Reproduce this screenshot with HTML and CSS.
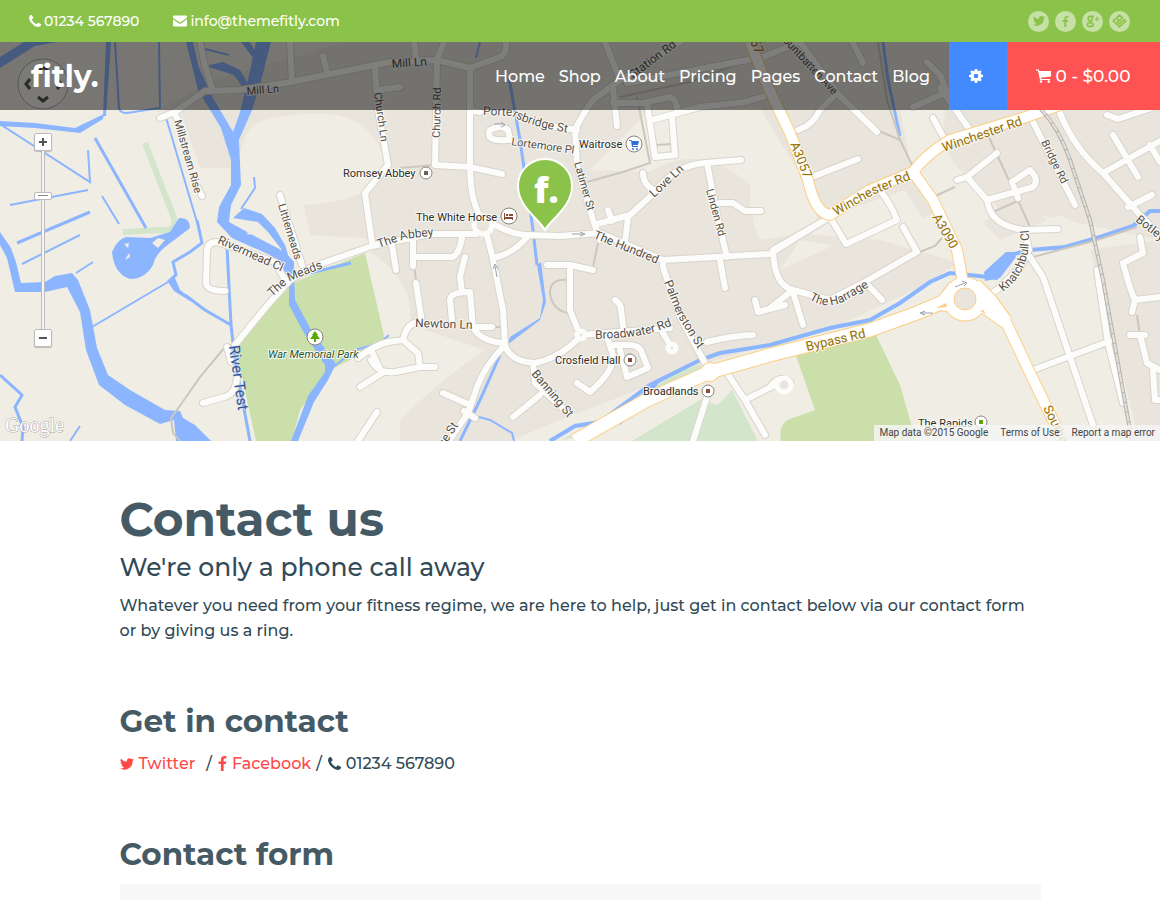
FILE: index.html
```html
<!DOCTYPE html>
<html lang="en">
<head>
<meta charset="utf-8">
<meta name="viewport" content="width=device-width, initial-scale=1">
<title>Contact us - fitly.</title>
<link rel="stylesheet" href="styles.css">
</head>
<body>
<svg class="sprite" aria-hidden="true">
  <symbol id="i-phone" viewBox="0 0 1408 1408"><path transform="translate(0 1408) scale(1 -1)" d="M1408 296q0 -27 -10 -70.5t-21 -68.5q-21 -50 -122 -106q-94 -51 -186 -51q-27 0 -52.5 3.5t-57.5 12.5t-47.5 14.5t-55.5 20.5t-49 18q-98 35 -175 83q-128 79 -264.5 215.5t-215.5 264.5q-48 77 -83 175q-3 9 -18 49t-20.5 55.5t-14.5 47.5t-12.5 57.5t-3.5 52.5q0 92 51 186q56 101 106 122q25 11 68.5 21t70.5 10q14 0 21 -3q18 -6 53 -76q11 -19 30 -54t35 -63.5t31 -53.5q3 -4 17.5 -25t21.5 -35.5t7 -28.5q0 -20 -28.5 -50t-62 -55t-62 -53t-28.5 -46q0 -9 5 -22.5t8.5 -20.5t14 -24t11.5 -19q76 -137 174 -235t235 -174q2 -1 19 -11.5t24 -14t20.5 -8.5t22.5 -5q18 0 46 28.5t53 62t55 62t50 28.5q14 0 28.5 -7t35.5 -21.5t25 -17.5q25 -15 53.5 -31t63.5 -35t54 -30q70 -35 76 -53q3 -7 3 -21z"/></symbol>
  <symbol id="i-mail" viewBox="0 0 14 12"><path d="M1.300.500h11.400c.7 0 1.300.6 1.300 1.200 0 1-.6 1.500-1.200 2L8.600 6.600C8 7 7.500 7.400 7 7.400S6 7 5.400 6.600L1.200 3.700C.6 3.200 0 2.700 0 1.700 0 1 .6.500 1.300.500zM0 4.300l4.900 3.400c.8.6 1.400 1 2.100 1s1.300-.4 2.100-1L14 4.300v5.900c0 .7-.6 1.300-1.300 1.300H1.300C.6 11.500 0 10.900 0 10.200z"/></symbol>
  <symbol id="i-twitter" viewBox="0 0 24 20"><path d="M24 2.400a9.800 9.800 0 0 1-2.800.8A5 5 0 0 0 23.300.500a9.900 9.900 0 0 1-3.100 1.200 4.900 4.900 0 0 0-8.400 4.500A14 14 0 0 1 1.700 1a4.900 4.900 0 0 0 1.500 6.600 4.900 4.900 0 0 1-2.200-.6c0 2.300 1.600 4.400 3.900 4.900a5 5 0 0 1-2.200.1 4.900 4.900 0 0 0 4.600 3.400A9.900 9.900 0 0 1 0 17.400a14 14 0 0 0 21.500-12.500A10 10 0 0 0 24 2.400z"/></symbol>
  <symbol id="i-facebook" viewBox="0 0 9 16"><path d="M8.600.200v2.500H7.100C6 2.700 5.700 3.300 5.700 4v1.800h2.800l-.4 2.800H5.700V16H2.800V8.600H.300V5.800h2.500V3.700C2.800 1.300 4.300 0 6.500 0c1 0 1.900.1 2.100.2z"/></symbol>
  <symbol id="i-gear" viewBox="0 0 14 14"><path fill-rule="evenodd" d="M5.900 0h2.200l.4 1.800 1 .4 1.500-1 1.600 1.600-1 1.500.4 1L14 5.900v2.200l-1.900.4-.4 1 1 1.500-1.600 1.600-1.600-1-1 .4-.4 2H5.900l-.4-2-1-.4-1.600 1-1.600-1.600 1-1.500-.4-1L0 8.100V5.900l1.900-.5.4-1-1-1.600 1.600-1.600 1.600 1 1-.4zM7 4.700a2.300 2.300 0 1 0 0 4.600 2.300 2.300 0 0 0 0-4.600z"/></symbol>
  <symbol id="i-cart" viewBox="0 0 15 14"><path d="M0 .600h2.900l.4 1.400H15v5.500L4.800 8.700l.3 1.200h9v1.200H4L2 1.800H0z"/><circle cx="5" cy="12.600" r="1.300"/><circle cx="12.800" cy="12.600" r="1.300"/></symbol>
</svg>

<div class="topbar">
  <div class="topbar-contact">
    <a href="tel:01234567890"><svg class="ico-12"><use href="#i-phone"/></svg>01234 567890</a>
    <a href="mailto:info@themefitly.com"><svg class="ico-14"><use href="#i-mail"/></svg>info@themefitly.com</a>
  </div>
  <div class="social">
    <a href="#" aria-label="Twitter"><svg width="12" height="10"><use href="#i-twitter"/></svg></a>
    <a href="#" aria-label="Facebook"><svg width="7" height="11"><use href="#i-facebook"/></svg></a>
    <a href="#" aria-label="Google plus"><svg class="line" width="14" height="13" viewBox="0 0 14 13"><ellipse cx="4.200" cy="3.600" rx="2" ry="2.300"/><path d="M4.500 1.200H8M6 5.500C3.200 6.500 4 7.200 5.500 7.800"/><ellipse cx="4.200" cy="9.700" rx="2.900" ry="1.900"/><path class="thin" d="M8.800 4h4.600M11.100 1.700v4.600"/></svg></a>
    <a href="#" aria-label="Foursquare"><svg class="line" width="15" height="14" viewBox="0 0 15 14"><path d="M3.800 4.200 1.200 7l6.300 5.800L13.800 7l-1.500-1.500L7.500 9.800 4.400 7"/><path d="M4 4.500 7.500 1.200l3 2.600-3 3L5 4.600"/></svg></a>
  </div>
</div>

<div class="hero">
  <header class="header">
    <a class="brand" href="#">fitly.</a>
    <nav class="nav">
      <a href="#">Home</a><a href="#">Shop</a><a href="#">About</a><a href="#">Pricing</a><a href="#">Pages</a><a href="#">Contact</a><a href="#">Blog</a>
    </nav>
    <button class="settings" type="button" aria-label="Settings"><svg width="14" height="14"><use href="#i-gear"/></svg></button>
    <a class="cart" href="#"><svg width="15" height="14"><use href="#i-cart"/></svg>0 - $0.00</a>
  </header>

  <svg class="map" viewBox="0 42 1160 399" preserveAspectRatio="xMidYMid slice" role="img" aria-label="Street map">
    <defs>
      <path id="streets" d="M200 42L204 62L212 88M160 118L175 112L205 91L240 90L285 83L340 72L390 62L437 60L470 68L500 57Q507 54 506 42M290 42L292 82M323 56L327 72M375 68L378 110L388 165L365 193L372 243M444 42L437 60L435 165L470 167L502 174M414 42L416 60M378 90L400 87M470 68L470 165Q470 205 484 222M470 110L480 112
      M174 112L178 120M198 188L202 196M235 345L265 308L290 280L312 267L372 246L430 234L477 234M495 225Q515 235 527 235L560 236L600 233L663 260L770 254L795 238L830 217M600 240L593 220L577 165L575 130Q582 115 593 100L613 85L680 42M605 42L620 80M550 126L577 130M597 224L630 215L655 192Q675 165 705 163L741 160M643 173Q643 185 655 191M707 163L718 220L727 257M720 203L733 203L745 211L761 211M608 210L612 221M628 217L625 243
      M613 88L617 126M613 103L643 103L670 97Q677 100 677 110M647 103L655 157L675 155L672 117M652 120L700 107L745 102L765 96M627 83L763 57L800 42M507 140Q485 142 490 130Q500 124 508 130L510 140
      M486 232L492 255L503 310L505 345Q510 362 535 363Q560 358 581 336M497 257Q515 252 527 237M413 240L413 266M413 257L453 257Q460 252 462 237M392 245L396 270M416 283L422 323M465 257L460 277L462 291M452 320L450 300Q450 292 470 292L473 327Q480 341 503 343M473 327L492 327M358 358Q375 345 388 342L403 340Q406 325 415 323M403 340L418 353L420 367L395 372Q378 374 371 360M371 350L382 373L360 387M420 367L435 367M377 412L358 441M227 347L231 362M237 378Q235 395 224 397L203 403M217 242Q207 242 207 252L206 283Q207 291 225 291M217 242L275 262L285 280M280 195L302 265
      M580 335L570 310L570 268M547 265L570 265L593 270M580 335L670 328M615 300Q621 303 621 310L624 333M663 333L672 348M607 337L613 355Q615 370 590 392L577 383M610 345L628 345Q640 345 642 353L648 368L627 377L620 350M663 260L663 267L680 317L705 363M505 345Q485 365 477 387L468 413L446 445M443 393L470 405M464 411L475 418M533 363L535 383L568 413M540 395L513 417M720 260L725 288M707 342Q730 336 753 335M755 300L758 312L785 305M727 373L745 400L765 435M745 400L775 385M707 397L693 441M790 382Q780 374 770 387
      M830 217L846 244L897 220Q893 208 880 190M830 217L773 250Q774 285 793 290L830 300L863 283L917 252L903 227M793 290L770 308M793 292L803 325M866 283L882 300M812 177L858 159M798 130Q813 125 820 110L837 93L800 42M837 93L877 132M933 118L945 140M913 107L947 92L940 75L927 62M940 88L970 130M853 43L863 63M1032 120L1075 205M1060 113Q1075 150 1103 173L1140 215L1160 235M1103 173L1160 141M1113 135L1138 177M1128 207L1152 195M1150 145L1160 162M1107 115L1118 119L1160 105
      M957 180L967 177L997 153M967 177L987 200Q990 225 1023 230L1058 229M987 200L1033 187Q1040 180 1030 170L1012 182L1018 198M1025 232L1029 250L1020 268L997 290L983 297M1030 257L1043 277L1070 357L1093 425M1097 270L1108 343L1123 403M1033 370L1110 341M1140 237L1143 253L1123 263Q1130 290 1135 300L1132 312M1135 300L1160 297M1130 335L1145 335M1140 335L1147 363L1160 370M1153 370L1155 400L1160 400"/>
      <path id="mains" d="M750 42L767 85L790 133L808 180Q815 213 830 215L870 190L913 172Q925 155 950 140L1023 118L1060 105L1160 60M913 172L933 200L957 250L963 283M1005 320L1030 373L1063 441"/>
      <path id="bypass" d="M955 287L943 302L917 313L870 330L770 355L710 372L647 400L575 441M942 304L985 307L1006 322M975 285L990 300L1006 322"/>
      <path id="l-porters" d="M483 115L512 116Q527 126 575 134"/>
      <path id="l-meads" d="M272 297L290 281L325 267"/>
      <path id="l-abbey" d="M379 248L405 239L440 235"/>
      <path id="l-win1" d="M836 216L875 194L930 172"/>
      <path id="l-knatch" d="M1003 292Q1034 269 1028 225"/>
      <path id="l-harrage" d="M809 299Q828 312 850 298L890 274"/>
      <path id="l-broad" d="M595 339Q635 338 655 332L700 315"/>
      <path id="l-palm" d="M664 282L677 315L708 365"/>
    </defs>

    <rect class="land" y="42" width="1160" height="399"/>
    <path class="urban" d="M155 112L215 80L345 42H1160V441H1138Q1120 360 1135 295L1110 240L1060 215L1000 240L960 200L940 210L860 250L800 240L780 270L900 215L955 265L925 285L840 325L710 362L560 420L510 441H400V420Q440 380 485 350L410 325Q415 280 370 252L395 240L310 235L292 150L240 155L230 168L200 168L180 110Z"/>
    <path class="land" d="M240 155Q245 125 265 120Q330 105 362 125Q390 150 383 178Q360 203 300 205L245 185ZM590 170L650 110L760 108L785 150L810 190L820 230L760 240Q750 220 750 185Q700 140 650 172ZM785 232L905 190L950 260L880 240ZM900 110H945Q940 150 960 170L1000 210L960 240L910 160ZM1040 215L1160 240V441H1140L1090 250Z"/>
    <path class="urban" d="M1090 250L1160 240V441H1140Z"/>
    <path class="park" d="M365 253L385 340L350 360L330 370L300 410L292 441H256L235 345L290 284ZM795 353L876 335L900 385L916 441H781Q778 423 790 419L815 410Z"/>
    <path class="wood" d="M560 441L625 405L660 378L698 365L710 372L600 430ZM632 441L700 400L718 405L732 390L758 441Z"/>
    <path class="strip" d="M145 143L174 218Q177 232 160 230L123 232"/>

    <g class="water">
      <path d="M0 57L24 42H58L35 46L0 68ZM106 42H111L106 116H103ZM0 121L35 123L75 128L104 114L103 119L80 133L35 128L0 126ZM186 42H193L199 68L213 98L239 142L241 185L231 205L229 222L262 240L285 252L294 262V278H286L270 255L232 238L217 222L219 207L231 185V160L221 128L198 90ZM256 42H271L260 85L252 110L235 149L231 138L240 112L248 80ZM241 42H250L259 58L257 63ZM205 66L223 62L240 70L249 85L245 91L234 75ZM233 218L244 208L262 214L275 228L285 245L292 268L282 250L268 232L258 222ZM112 252Q118 238 127 237L150 238L170 232L179 218Q190 217 190 228L165 247Q155 255 153 265Q145 279 130 279Q114 274 112 252ZM0 232L11 248L16 262L21 283L45 282L55 276L72 273L78 280L90 310L97 348L108 375L130 390L165 410L180 411L183 418L195 425L211 441H176L174 420L160 424L125 405L99 385L86 350L80 312L67 287L45 292L15 292L7 258L0 245ZM168 282L175 278L180 290L197 303L190 301L174 291ZM289 275H294L295 300L310 328L336 364L328 380L314 402L298 441H291L308 396L325 372L325 365L304 333L289 305ZM984 272L1006 252H1014L1016 257L1000 278L985 281ZM620 412L665 375L640 407L620 425ZM507 345L510 337L540 318L543 300L537 265L541 262L546 302L540 320Z"/>
      <path class="w2" d="M115 42L119 108Q120 113 127 113L160 108L159 42M0 124L90 182L88 150M10 205L88 190M102 196L119 224M22 264L80 235M76 273L93 262M168 282L92 327M165 114L199 229M205 49L229 55M254 177L255 188L241 209M332 368L355 350L380 343L389 335M475 416L490 420L512 433L514 441M480 42L476 58M70 441L80 426"/>
      <path class="w3" d="M95 138L146 228M17 243L90 212M197 220L202 243L190 252L173 262L176 275L168 282M185 295L205 310L231 325M227 247L231 325L235 360L250 441M0 375L22 395L15 407L23 427L22 441M351 263L289 278M509 78L520 140L533 230L537 265M500 355L480 400L460 441M883 42L888 80L900 136"/>
      <path class="w4" d="M550 441L575 426L600 422L620 407L650 385L700 360L720 353L770 345L830 328L870 320L900 303L930 282L950 273L998 278M1006 256L1030 250L1065 247L1100 237L1133 226L1150 211H1160"/>
    </g>
    <path class="land" d="M152 243L158 238L165 240L158 248ZM124 244L129 243L128 248ZM125 260L129 253L130 257ZM246 233L255 230L250 235Z"/>
    <path class="trackpath" d="M225 347L200 377L177 410L171 418L173 433L180 441M587 182L623 172L650 163L637 97M598 243L593 267M568 280Q550 278 550 293Q552 310 568 313M620 97L690 82L770 52M878 42L887 100L900 140L913 167M877 130L900 140M987 133L1012 187L1030 227M933 197L955 187M993 212L1020 200M917 253L935 246L942 238M1033 257L1097 240L1137 227M400 168L435 165M415 270L416 283M492 327L505 327M657 145L671 144M1137 315L1140 335"/>

    <use class="case" href="#streets"/><use class="fill" href="#streets"/>
    <g class="rounds"><circle cx="483" cy="225" r="9"/><circle cx="581" cy="335" r="4"/><circle cx="672" cy="348" r="4"/><circle cx="784" cy="385" r="7"/></g>
    <use class="main-case" href="#mains"/><use class="main-case wide" href="#bypass"/><circle class="ring-case" cx="965" cy="299" r="16"/><circle class="main-case" cx="710" cy="372" r="4"/>
    <use class="main-fill" href="#mains"/><use class="main-fill wide" href="#bypass"/><circle class="ring" cx="965" cy="299" r="16"/><circle class="main-fill" cx="710" cy="372" r="4"/>
    <circle class="island" cx="965" cy="299" r="11"/>
    <path class="wedge" d="M936 308L946 303L947 307ZM980 311L986 314L983 310Z"/>
    <g class="rail"><path class="rail-a" d="M1040 108Q1060 130 1070 160L1090 220L1103 280L1132 441"/><path class="rail-b" d="M1040 108Q1060 130 1070 160L1090 220L1103 280L1132 441"/></g>
    <path class="arrows" d="M572 234H583M580 232L585 234L580 236M497 277L495 266M493 269L495 264L498 269M494 124H503M501 122L505 125L501 127M933 313H922M925 311L920 313L925 315M955 287L965 283M962 281L967 283L964 286"/>

    <g class="labels">
      <g class="lane">
        <text transform="translate(174 121) rotate(74)">Millstream Rise</text>
        <text transform="translate(247 95) rotate(-5)">Mill Ln</text>
        <text transform="translate(374 93) rotate(82)">Church Ln</text>
        <text transform="translate(440 138) rotate(-89)">Church Rd</text>
        <text transform="translate(511 145) rotate(8)">Lortemore Pl</text>
        <text transform="translate(278 205) rotate(73)">Littlemeads</text>
        <text transform="translate(574 163) rotate(74)">Latimer St</text>
        <text transform="translate(706 190) rotate(75)">Linden Rd</text>
        <text transform="translate(776 34) rotate(47)">Mountbatten Ave</text>
        <text transform="translate(1041 142) rotate(64)">Bridge Rd</text>
      </g>
      <text transform="translate(392 68) rotate(-4)">Mill Ln</text>
      <text><textPath href="#l-porters">Portersbridge St</textPath></text>
      <text transform="translate(633 79) rotate(-37)">Station Rd</text>
      <text transform="translate(415 327) rotate(2)">Newton Ln</text>
      <text><textPath href="#l-abbey">The Abbey</textPath></text>
      <text><textPath href="#l-meads">The Meads</textPath></text>
      <text transform="translate(217 243) rotate(24)">Rivermead Cl</text>
      <text transform="translate(593 238) rotate(22)">The Hundred</text>
      <text><textPath href="#l-palm">Palmerston St</textPath></text>
      <text><textPath href="#l-broad">Broadwater Rd</textPath></text>
      <text transform="translate(531 374) rotate(50)">Banning St</text>
      <text transform="translate(432 466) rotate(-57)">Bridge St</text>
      <text transform="translate(654 198) rotate(-43)">Love Ln</text>
      <text transform="translate(1135 221) rotate(38)">Botley Rd</text>
      <text><textPath href="#l-knatch">Knatchbull Cl</textPath></text>
      <text><textPath href="#l-harrage">The Harrage</textPath></text>
      <g class="gold">
        <text transform="translate(741 20) rotate(67)">A3057</text>
        <text transform="translate(790 144) rotate(68)">A3057</text>
        <text><textPath href="#l-win1">Winchester Rd</textPath></text>
        <text transform="translate(944 152) rotate(-19)">Winchester Rd</text>
        <text transform="translate(932 217) rotate(60)">A3090</text>
        <text transform="translate(807 351) rotate(-13)">Bypass Rd</text>
        <text transform="translate(1043 408) rotate(64)">Southampton Rd</text>
      </g>
      <text class="river" transform="translate(229 346) rotate(82)">River Test</text>
      <g class="places">
        <text x="343" y="177">Romsey Abbey</text>
        <text x="579" y="148">Waitrose</text>
        <text x="416" y="221">The White Horse</text>
        <text x="555" y="364">Crosfield Hall</text>
        <text x="643" y="395">Broadlands</text>
        <text x="918" y="427">The Rapids</text>
        <text class="parkname" x="268" y="358">War Memorial Park</text>
      </g>
    </g>
    <g class="pois"><circle cx="426" cy="173" r="6"/><circle cx="634" cy="144" r="8"/><circle cx="509" cy="216" r="8"/><circle cx="630" cy="360" r="6"/><circle cx="708" cy="391" r="6"/><circle cx="981" cy="422" r="6"/><circle cx="315" cy="337" r="8"/></g>
    <path fill="#6b6157" d="M424 171h4v4h-4z"/><path fill="#8a4b32" d="M628 358h4v4h-4zM706 389h4v4h-4zM504 213h1v4h8v3h-1v-1h-7v1h-1zM506 214h2v2h-2zM509 214h4v2h-4z"/><path fill="#5aa700" d="M979 420h4v4h-4zM315 331l3 4h-1l3 4h-4v3h-2v-3h-4l3-4h-1z"/>
    <path fill="#2f6fd6" d="M629 140h2l1 1h7l-1 4h-5v1h5v1h-6l-1-6h-2z"/><g fill="#2f6fd6"><circle cx="633" cy="149" r="1"/><circle cx="637" cy="149" r="1"/></g>

    <path class="pin" d="M545 230C539 219 518 207 518 186A27 27 0 0 1 572 186C572 207 551 219 545 230Z"/>
    <text class="pin-text" x="534" y="203">f.</text>
    <g class="pan"><circle cx="43" cy="84" r="25"/><path d="M30 79L26 84L30 89M57 79L61 84L57 89M38 71L43 67L48 71M38 97L43 101L48 97"/></g>
    <text class="google" x="5" y="432">Google</text>
  </svg>

  <div class="zoomer">
    <button type="button" aria-label="Zoom in"><svg width="8" height="8" viewBox="0 0 8 8"><path d="M0 4H8M4 0V8"/></svg></button>
    <input type="range" min="0" max="100" value="76" aria-label="Zoom level">
    <button type="button" aria-label="Zoom out"><svg width="8" height="8" viewBox="0 0 8 8"><path d="M0 4H8"/></svg></button>
  </div>
  <div class="credits"><span>Map data ©2015 Google</span><a href="#">Terms of Use</a><a href="#">Report a map error</a></div>
</div>

<main class="content">
  <h1>Contact us</h1>
  <p class="lead">We're only a phone call away</p>
  <p class="intro">Whatever you need from your fitness regime, we are here to help, just get in contact below via our contact form or by giving us a ring.</p>
  <h2>Get in contact</h2>
  <p class="links">
    <a href="#"><svg width="14" height="12"><use href="#i-twitter"/></svg>Twitter</a>
    <span class="slash first">/</span>
    <a href="#"><svg width="9" height="15"><use href="#i-facebook"/></svg>Facebook</a>
    <span class="slash">/</span>
    <span class="tel"><svg width="13" height="13"><use href="#i-phone"/></svg>01234 567890</span>
  </p>
  <h2>Contact form</h2>
  <form class="form" aria-label="Contact form"></form>
</main>
</body>
</html>
```
FILE: styles.css
```css
* { box-sizing: border-box; }
html { overflow-x: hidden; }
body {
  margin: 0;
  min-height: 100vh;
  display: flex;
  flex-direction: column;
  background: #fff;
  color: #324a56;
  font-family: Montserrat, Inter, "Open Sans", sans-serif;
  font-weight: 500;
}
a { color: inherit; text-decoration: none; }
svg { fill: currentColor; flex: none; }
.sprite { display: none; }

.topbar {
  display: flex;
  justify-content: space-between;
  align-items: center;
  height: 42px;
  padding: 0 30px 0 29px;
  background: #8bc34a;
  color: #fff;
  font-size: 14px;
}
.topbar-contact { display: flex; gap: 34px; }
.topbar-contact a { display: flex; align-items: center; gap: 3px; }
.ico-12 { width: 12px; height: 12px; }
.ico-14 { width: 14px; height: 12px; }
.social { display: flex; gap: 6px; }
.social a {
  display: grid;
  place-items: center;
  width: 21px;
  height: 21px;
  border-radius: 50%;
  background: #c5e1a5;
  color: #8bc34a;
}
.line { fill: none; stroke: currentColor; stroke-width: 1.6; stroke-linejoin: round; }
.thin { stroke-width: 1.2; }

.hero { position: relative; overflow: hidden; }
.map { display: block; width: 100%; height: 399px; }
.header {
  position: absolute;
  inset: 0 0 auto;
  display: flex;
  align-items: stretch;
  height: 68px;
  background: rgba(0, 0, 0, 0.5);
  color: #fff;
  font-size: 16px;
}
.brand {
  display: flex;
  align-items: center;
  padding: 0 0 0 31px;
  font-size: 30px;
  font-weight: 700;
}
.nav { display: flex; align-items: center; gap: 14px; margin-left: auto; padding-right: 19px; }
.settings {
  display: grid;
  place-items: center;
  width: 58px;
  border: 0;
  padding: 0 4px 0 0;
  background: #448aff;
  color: #fff;
}
.cart {
  display: flex;
  align-items: center;
  justify-content: center;
  gap: 4px;
  width: 153px;
  background: #ff5252;
  font-size: 17px;
}

.land { fill: #f0ede5; }
.urban { fill: #e9e5dd; }
.park { fill: #cbdfab; }
.wood { fill: #d3e5cb; }
.strip { fill: none; stroke: #d3e5cb; stroke-width: 6; }
.water { fill: #8cb5ff; }
.w2, .w3, .w4 { fill: none; stroke: #8cb5ff; stroke-width: 2; }
.w3 { stroke-width: 3; }
.w4 { stroke-width: 4; }
.trackpath { fill: none; stroke: #cbc7bd; stroke-width: 2; }
.case, .fill { fill: none; stroke: #d8d4cc; stroke-width: 8; stroke-linecap: round; stroke-linejoin: round; }
.fill { stroke: #fcfcfa; stroke-width: 6; }
.rounds { fill: #e9e5dd; stroke: #fcfcfa; stroke-width: 5; }
.main-case, .main-fill { fill: none; stroke: #fbce82; stroke-width: 12; stroke-linejoin: round; }
.main-fill { stroke: #fff; stroke-width: 10; }
.main-case.wide { stroke-width: 15; }
.main-fill.wide { stroke-width: 13; }
.ring-case, .ring { fill: none; stroke: #fbce82; stroke-width: 13; }
.ring { stroke: #fff; stroke-width: 11; }
.island { fill: #e9e5dd; stroke: #fbce82; stroke-width: 1; }
.wedge { fill: #fbce82; }
.rail path { fill: none; stroke: #b5b3ae; stroke-width: 4; }
.rail .rail-b { stroke: #e4e1da; stroke-width: 2; stroke-dasharray: 9 1; }
.arrows { fill: none; stroke: #9aa2ad; stroke-width: 1; }
.labels {
  font: 400 12px Roboto, sans-serif;
  fill: #544f47;
  stroke: #fbfaf7;
  stroke-width: 2px;
  stroke-linejoin: round;
  paint-order: stroke;
}
.lane { font-size: 11px; }
.gold { font-size: 13px; fill: #957000; }
.river { font-size: 15px; fill: #34558b; stroke: #c9dafa; stroke-width: 1px; }
.places { font-size: 11px; fill: #2e2b28; }
.parkname { font-style: italic; fill: #24572b; }
.pois { fill: #fff; stroke: #88837d; stroke-width: 1; }
.pin { fill: #8bc34a; stroke: #fff; stroke-width: 2; }
.pin-text { font: 800 35px "Open Sans", sans-serif; fill: #fff; }
.pan circle { fill: #fff; fill-opacity: 0.4; stroke: #aaa; }
.pan path { fill: none; stroke: #555; stroke-width: 3; }
.google { font: 400 20px "Liberation Serif", serif; fill: #fff; stroke: #aaa; stroke-width: 1px; paint-order: stroke; }

.zoomer {
  position: absolute;
  left: 34px;
  top: 91px;
  display: flex;
  flex-direction: column;
  align-items: center;
}
.zoomer button {
  display: grid;
  place-items: center;
  width: 18px;
  height: 18px;
  padding: 0;
  border: 1px solid #bbb;
  border-radius: 2px;
  background: #fff;
  box-shadow: 0 1px 1px rgba(0, 0, 0, 0.2);
}
.zoomer path { stroke: #555; stroke-width: 2; }
.zoomer input {
  appearance: none;
  writing-mode: vertical-lr;
  direction: rtl;
  width: 18px;
  height: 178px;
  margin: 0;
  background: none;
}
.zoomer input::-webkit-slider-runnable-track {
  width: 4px;
  height: 100%;
  border: solid #bbb;
  border-width: 0 1px;
  background: #f6f5f2;
}
.zoomer input::-webkit-slider-thumb {
  appearance: none;
  width: 18px;
  height: 8px;
  margin-left: -8px;
  border: 1px solid #bbb;
  border-radius: 2px;
  background: linear-gradient(#888, #888) center / 10px 1px no-repeat #fff;
}
.credits {
  position: absolute;
  right: 0;
  bottom: 0;
  display: flex;
  gap: 12px;
  padding: 0 5px;
  background: rgba(245, 245, 245, 0.8);
  color: #444;
  font: 400 10px/16px Roboto, sans-serif;
}

.content {
  flex: 1;
  display: flex;
  flex-direction: column;
  width: 100%;
  max-width: 961px;
  margin: 0 auto;
  padding: 50px 20px 0;
}
h1, h2 { margin: 0; color: #455a64; font-weight: 700; }
h1 { font-size: 47px; line-height: 58px; }
h2 { margin-top: 58px; font-size: 31px; line-height: 40px; }
.lead { margin: 0; font-size: 25px; line-height: 36px; }
.intro { margin: 8px 0 0; font-size: 16px; line-height: 25px; }
.links { display: flex; align-items: center; margin: 10px 0 0; font-size: 16px; line-height: 25px; }
.links a, .tel { display: flex; align-items: center; gap: 5px; }
.links a { color: #ff4848; }
.slash { padding: 0 6px 0 5px; }
.first { padding-left: 11px; }
.form { flex: 1; margin-top: 10px; min-height: 16px; background: #f7f7f7; }
```
